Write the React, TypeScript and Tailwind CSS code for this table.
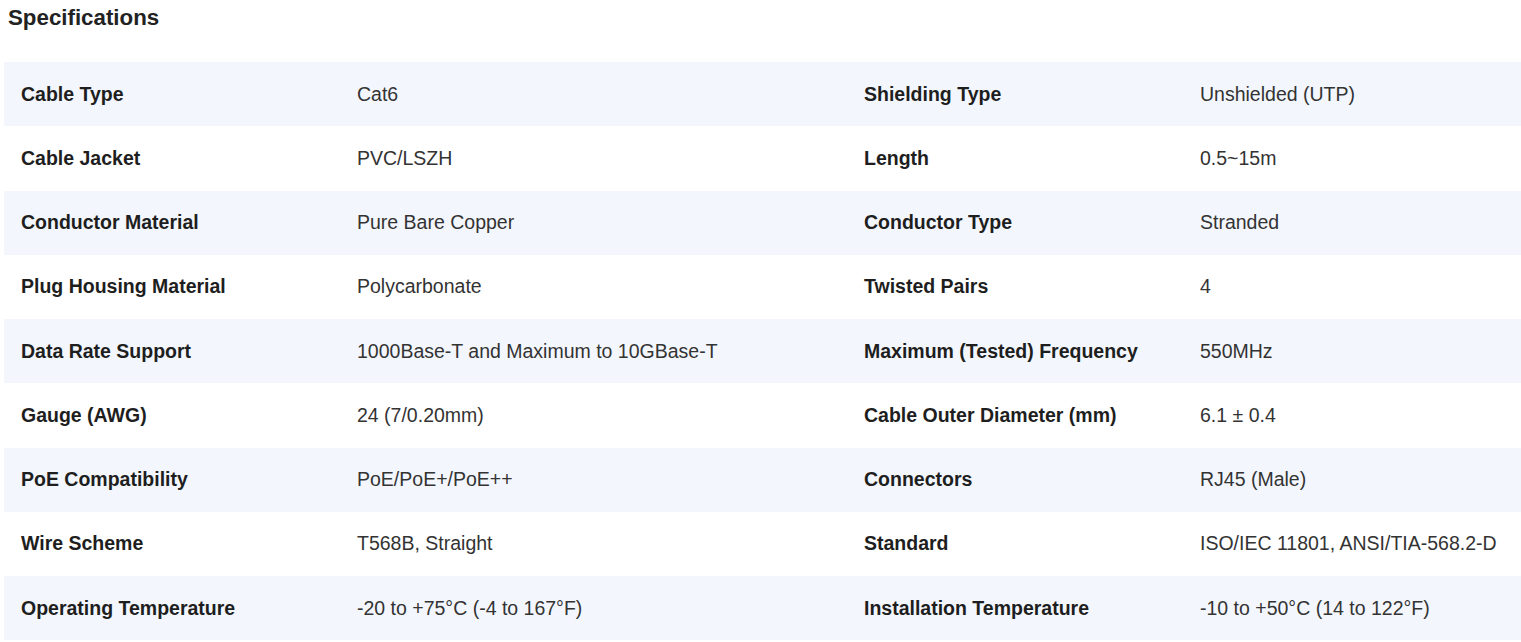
import React from "react";

const specs: [string, string, string, string][] = [
  ["Cable Type", "Cat6", "Shielding Type", "Unshielded (UTP)"],
  ["Cable Jacket", "PVC/LSZH", "Length", "0.5~15m"],
  ["Conductor Material", "Pure Bare Copper", "Conductor Type", "Stranded"],
  ["Plug Housing Material", "Polycarbonate", "Twisted Pairs", "4"],
  ["Data Rate Support", "1000Base-T and Maximum to 10GBase-T", "Maximum (Tested) Frequency", "550MHz"],
  ["Gauge (AWG)", "24 (7/0.20mm)", "Cable Outer Diameter (mm)", "6.1 ± 0.4"],
  ["PoE Compatibility", "PoE/PoE+/PoE++", "Connectors", "RJ45 (Male)"],
  ["Wire Scheme", "T568B, Straight", "Standard", "ISO/IEC 11801, ANSI/TIA-568.2-D"],
  ["Operating Temperature", "-20 to +75°C (-4 to 167°F)", "Installation Temperature", "-10 to +50°C (14 to 122°F)"],
];

export default function App() {
  return (
    <div className="min-h-screen bg-white font-['Liberation_Sans',Arial,sans-serif]">
      {/* Header */}
      <h2 className="h-[36px] pl-[8px] pt-[5px] text-[22.3px] font-bold leading-[26px] text-[#222]">
        Specifications
      </h2>

      <div className="mt-[26px] ml-[4px]">
        {specs.map((row, i) => (
          <div
            key={i}
            className={`grid h-[64.25px] grid-cols-[336px_507px_336px_1fr] items-center text-[19.5px] ${
              i % 2 === 0 ? "bg-[#f3f7fd]" : "bg-white"
            }`}
          >
            <div className="pl-[17px] font-bold text-[#1e1e1e]">{row[0]}</div>
            <div className="pl-[17px] text-[#333]">{row[1]}</div>
            <div className="pl-[17px] font-bold text-[#1e1e1e]">{row[2]}</div>
            <div className="pl-[17px] text-[#333]">{row[3]}</div>
          </div>
        ))}
      </div>
    </div>
  );
}
